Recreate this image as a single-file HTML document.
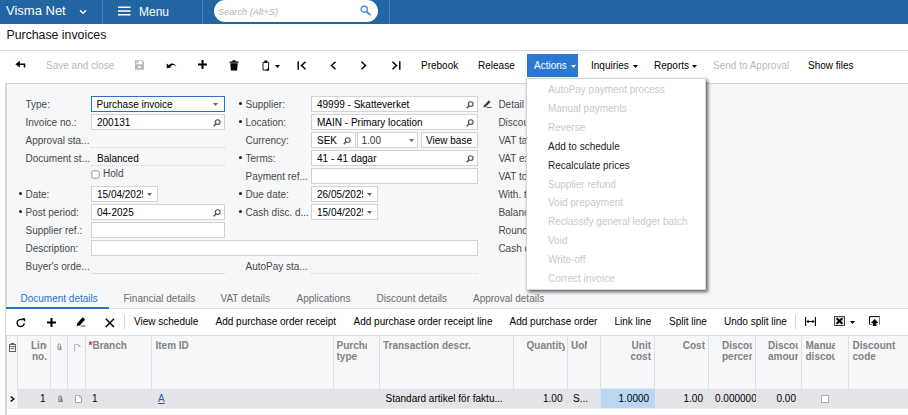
<!DOCTYPE html>
<html><head><meta charset="utf-8"><title>Purchase invoices</title>
<style>
*{box-sizing:border-box;margin:0;padding:0}
html,body{width:908px;height:415px;overflow:hidden;background:#fff;font-family:"Liberation Sans",Arial,sans-serif;font-size:10px;color:#000}
.abs,.t,.lbl,.inp,.mi,.tab,.gt,.gh,.gc{position:absolute;white-space:nowrap}
.t,.lbl,.mi,.tab,.gt,.gc{line-height:12px;font-size:10px}
#top{position:absolute;left:0;top:0;width:908px;height:24px;background:#2265a3;color:#fff}
#top .sep{position:absolute;top:0;width:1px;height:24px;background:#4681b8}
.dis{color:#b9b9b9}
.lbl{color:#484848}
.inp{height:16px;background:#fff;border:1px solid #d3d3d3;line-height:13px;padding-top:1px;padding-left:5px;overflow:hidden;color:#000;font-size:10px}
.dot{position:absolute;border-top:1px dotted #d4d4d4;height:0}
.req{position:absolute;width:3px;height:3px;border-radius:50%;background:#222}
.mi{left:21px;color:#1a1a1a}
.mi.d{color:#c9c9c9}
.tab{top:293px;color:#6b6b6b}
.gt{top:316px;color:#000}
.gh{font-size:10px;font-weight:bold;color:#828282;line-height:10.8px;overflow:hidden;top:341.2px}
.vl{position:absolute;top:335px;width:1px;height:54px;background:#dedfe2}
.gc{top:393px}
.ic{position:absolute;overflow:visible}
</style></head><body>
<div id="top">
<div class="abs" style="left:6px;top:3px;font-size:13px;line-height:16px">Visma Net</div>
<svg class="ic" style="left:79px;top:9px" width="8" height="6" viewBox="0 0 8 6"><path d="M1 1.2 L4 4.2 L7 1.2" stroke="#fff" stroke-width="1.4" fill="none"/></svg>
<div class="sep" style="left:102px"></div>
<svg class="ic" style="left:118px;top:6px" width="13" height="10" viewBox="0 0 13 10"><path d="M0 1.2h12.5M0 5h12.5M0 8.8h12.5" stroke="#fff" stroke-width="1.5"/></svg>
<div class="abs" style="left:139px;top:4px;font-size:12px;line-height:16px">Menu</div>
<div class="sep" style="left:202px"></div>
<div class="abs" style="left:214px;top:0px;width:164px;height:22px;border-radius:11px;background:#fff"></div>
<div class="abs" style="left:218px;top:6.7px;font-size:9.2px;font-style:italic;color:#b3b3b3;line-height:11px">Search (Alt+S)</div>
<svg class="ic" style="left:360px;top:5px" width="12" height="11" viewBox="0 0 12 11"><circle cx="4.2" cy="4.2" r="3.1" stroke="#2a7bd0" stroke-width="1.2" fill="none"/><path d="M6.5 6.5L10.6 10.2" stroke="#2a7bd0" stroke-width="1.5"/></svg>
<div class="sep" style="left:389px"></div>
</div>
<div class="abs" style="left:6.5px;top:28px;font-size:12.3px;line-height:15px;color:#111">Purchase invoices</div>
<div class="abs" style="left:0;top:50px;width:908px;height:1px;background:#dcdcdc"></div>

<div class="abs" style="left:5px;top:83px;width:903px;height:332px;background:#f6f7f9;border-left:2px solid #d6d7da;border-top:1px solid #d0d2d6"></div>
<svg class="ic" style="left:15px;top:60px" width="11" height="8" viewBox="0 0 11 8"><path d="M3 4.2 H9.5 V7.6" stroke="#000" stroke-width="1.5" fill="none"/><path d="M0.4 4.2 L4.8 0.8 V7.6Z" fill="#000"/></svg>
<div class="t dis" style="left:46px;top:60px">Save and close</div>
<svg class="ic" style="left:135px;top:60px" width="9" height="10" viewBox="0 0 9 10"><path d="M0 0.3h7.6l1.4 1.4v8h-9z" fill="#b9b9b9"/><rect x="1.6" y="1" width="5.6" height="3.2" fill="#fff"/><rect x="2.4" y="1" width="1" height="2" fill="#999"/><circle cx="4.5" cy="7" r="1.3" fill="#fff"/></svg>
<svg class="ic" style="left:166px;top:62px" width="11" height="7" viewBox="0 0 11 7"><path d="M2.8 3.4 C4.6 0.6 8.8 0.8 10.2 4.6 C8.6 2.6 6 2.4 4.4 4.6Z" fill="#000"/><path d="M0.6 1.6 L5.4 5.2 L0.8 6.2Z" fill="#000"/></svg>
<svg class="ic" style="left:198px;top:60px" width="9" height="9" viewBox="0 0 9 9"><path d="M4.5 0v9M0 4.5h9" stroke="#000" stroke-width="2"/></svg>
<svg class="ic" style="left:229px;top:60px" width="10" height="11" viewBox="0 0 10 11"><path d="M0.5 1.5h9v1.3h-9z M3.5 0.3h3v1.4h-3z M1.3 3.3h7.4l-0.6 7.2h-6.2z" fill="#000"/></svg>
<svg class="ic" style="left:261.5px;top:60px" width="8" height="11" viewBox="0 0 8 11"><path d="M1 2.4h5.6v7.6h-5.6z" stroke="#000" stroke-width="0.9" fill="none"/><path d="M2.3 0.4h3v2h-3z M7 7V10.4H4Z" fill="#000"/></svg>
<svg class="ic" style="left:275px;top:64.5px" width="5" height="3" viewBox="0 0 5 3"><path d="M0 0h5L2.5 3z" fill="#000"/></svg>
<svg class="ic" style="left:297px;top:61px" width="10" height="9" viewBox="0 0 10 9"><path d="M1.2 0.3v8.4" stroke="#000" stroke-width="1.4"/><path d="M8.5 0.8L4.5 4.5L8.5 8.2" stroke="#000" stroke-width="1.5" fill="none"/></svg>
<svg class="ic" style="left:329px;top:61px" width="8" height="9" viewBox="0 0 8 9"><path d="M6.5 0.8L2.5 4.5L6.5 8.2" stroke="#000" stroke-width="1.5" fill="none"/></svg>
<svg class="ic" style="left:360px;top:61px" width="8" height="9" viewBox="0 0 8 9"><path d="M1.5 0.8L5.5 4.5L1.5 8.2" stroke="#000" stroke-width="1.5" fill="none"/></svg>
<svg class="ic" style="left:391px;top:61px" width="10" height="9" viewBox="0 0 10 9"><path d="M8.8 0.3v8.4" stroke="#000" stroke-width="1.4"/><path d="M1.5 0.8L5.5 4.5L1.5 8.2" stroke="#000" stroke-width="1.5" fill="none"/></svg>
<div class="t" style="left:421px;top:60px">Prebook</div>
<div class="t" style="left:478px;top:60px">Release</div>
<div class="abs" style="left:527px;top:54px;width:51px;height:23px;background:#2a78d2"></div>
<div class="t" style="left:534px;top:60px;color:#fff">Actions</div>
<svg class="ic" style="left:571px;top:64.5px" width="5" height="3" viewBox="0 0 5 3"><path d="M0 0h5L2.5 3z" fill="#fff"/></svg>
<div class="t" style="left:591px;top:60px">Inquiries</div>
<svg class="ic" style="left:633px;top:64.5px" width="5" height="3" viewBox="0 0 5 3"><path d="M0 0h5L2.5 3z" fill="#000"/></svg>
<div class="t" style="left:654px;top:60px">Reports</div>
<svg class="ic" style="left:692px;top:64.5px" width="5" height="3" viewBox="0 0 5 3"><path d="M0 0h5L2.5 3z" fill="#000"/></svg>
<div class="t dis" style="left:713px;top:60px">Send to Approval</div>
<div class="t" style="left:808px;top:60px">Show files</div>

<div class="lbl" style="left:25.5px;top:99px">Type:</div>
<div class="inp" style="left:91px;top:96px;width:134px;height:16px;border:1.5px solid #2a72c8;line-height:13px;padding-left:4.5px">Purchase invoice<svg class="ic" style="right:6px;top:5.7px" width="5" height="3" viewBox="0 0 5 3"><path d="M0 0h5L2.5 3z" fill="#666"/></svg></div>
<div class="lbl" style="left:25.5px;top:117px">Invoice no.:</div>
<div class="inp" style="left:91px;top:114px;width:134px;">200131<svg class="ic" style="right:3px;top:3.5px" width="8" height="8" viewBox="0 0 8 8"><circle cx="4.7" cy="3.1" r="2.4" stroke="#505050" stroke-width="1.15" fill="none"/><path d="M3 4.9L0.7 7.3" stroke="#505050" stroke-width="1.4"/></svg></div>
<div class="lbl" style="left:25.5px;top:135px">Approval sta...</div>
<div class="dot" style="left:91px;top:147px;width:134px"></div>
<div class="lbl" style="left:25.5px;top:153px">Document st...</div>
<div class="t" style="left:97px;top:153px">Balanced</div>
<div class="dot" style="left:91px;top:165px;width:134px"></div>
<svg class="ic" style="left:90px;top:169px" width="11" height="11" viewBox="0 0 11 11"><rect x="1.8" y="1.8" width="7.4" height="7.4" rx="1.6" fill="#fff" stroke="#8c8c8c" stroke-width="0.9"/></svg><div class="lbl" style="left:103px;top:167.5px">Hold</div>
<div class="req" style="left:18.5px;top:192px"></div>
<div class="lbl" style="left:25.5px;top:189px">Date:</div>
<div class="inp" style="left:91px;top:186px;width:67px;"><div style="width:45.7px;overflow:hidden">15/04/2025</div><svg class="ic" style="right:5px;top:5.7px" width="5" height="3" viewBox="0 0 5 3"><path d="M0 0h5L2.5 3z" fill="#666"/></svg></div>
<div class="req" style="left:18.5px;top:210px"></div>
<div class="lbl" style="left:25.5px;top:207px">Post period:</div>
<div class="inp" style="left:91px;top:204px;width:134px;">04-2025<svg class="ic" style="right:3px;top:3.5px" width="8" height="8" viewBox="0 0 8 8"><circle cx="4.7" cy="3.1" r="2.4" stroke="#505050" stroke-width="1.15" fill="none"/><path d="M3 4.9L0.7 7.3" stroke="#505050" stroke-width="1.4"/></svg></div>
<div class="lbl" style="left:25.5px;top:225px">Supplier ref.:</div>
<div class="inp" style="left:91px;top:222px;width:134px;"></div>
<div class="lbl" style="left:25.5px;top:243px">Description:</div>
<div class="inp" style="left:91px;top:240px;width:387px;"></div>
<div class="lbl" style="left:25.5px;top:261px">Buyer's orde...</div>
<div class="abs" style="left:91px;top:273px;width:134px;height:1px;background:#d9d9dc"></div>
<div class="req" style="left:238.5px;top:102px"></div>
<div class="lbl" style="left:245.5px;top:99px">Supplier:</div>
<div class="inp" style="left:311px;top:96px;width:167px;">49999 - Skatteverket<svg class="ic" style="right:3px;top:3.5px" width="8" height="8" viewBox="0 0 8 8"><circle cx="4.7" cy="3.1" r="2.4" stroke="#505050" stroke-width="1.15" fill="none"/><path d="M3 4.9L0.7 7.3" stroke="#505050" stroke-width="1.4"/></svg></div>
<div class="req" style="left:238.5px;top:120px"></div>
<div class="lbl" style="left:245.5px;top:117px">Location:</div>
<div class="inp" style="left:311px;top:114px;width:167px;">MAIN - Primary location<svg class="ic" style="right:3px;top:3.5px" width="8" height="8" viewBox="0 0 8 8"><circle cx="4.7" cy="3.1" r="2.4" stroke="#505050" stroke-width="1.15" fill="none"/><path d="M3 4.9L0.7 7.3" stroke="#505050" stroke-width="1.4"/></svg></div>
<div class="lbl" style="left:245.5px;top:135px">Currency:</div>
<div class="inp" style="left:311px;top:132px;width:44.5px;">SEK<svg class="ic" style="right:4px;top:3.5px" width="8" height="8" viewBox="0 0 8 8"><circle cx="4.7" cy="3.1" r="2.4" stroke="#505050" stroke-width="1.15" fill="none"/><path d="M3 4.9L0.7 7.3" stroke="#505050" stroke-width="1.4"/></svg></div>
<div class="inp" style="left:357px;top:132px;width:61px;color:#333;padding-left:3.5px">1.00<svg class="ic" style="right:3.5px;top:5.7px" width="5" height="3" viewBox="0 0 5 3"><path d="M0 0h5L2.5 3z" fill="#666"/></svg></div>
<div class="inp" style="left:420.5px;top:132px;width:57px;text-align:center;padding-left:0;background:#fbfbfb">View base</div>
<div class="req" style="left:238.5px;top:156px"></div>
<div class="lbl" style="left:245.5px;top:153px">Terms:</div>
<div class="inp" style="left:311px;top:150px;width:167px;">41 - 41 dagar<svg class="ic" style="right:3px;top:3.5px" width="8" height="8" viewBox="0 0 8 8"><circle cx="4.7" cy="3.1" r="2.4" stroke="#505050" stroke-width="1.15" fill="none"/><path d="M3 4.9L0.7 7.3" stroke="#505050" stroke-width="1.4"/></svg></div>
<div class="lbl" style="left:245.5px;top:171px">Payment ref...</div>
<div class="inp" style="left:311px;top:168px;width:167px;"></div>
<div class="req" style="left:238.5px;top:192px"></div>
<div class="lbl" style="left:245.5px;top:189px">Due date:</div>
<div class="inp" style="left:311px;top:186px;width:67px;"><div style="width:45.7px;overflow:hidden">26/05/2025</div><svg class="ic" style="right:5px;top:5.7px" width="5" height="3" viewBox="0 0 5 3"><path d="M0 0h5L2.5 3z" fill="#666"/></svg></div>
<div class="req" style="left:238.5px;top:210px"></div>
<div class="lbl" style="left:245.5px;top:207px">Cash disc. d...</div>
<div class="inp" style="left:311px;top:204px;width:67px;"><div style="width:45.7px;overflow:hidden">15/04/2025</div><svg class="ic" style="right:5px;top:5.7px" width="5" height="3" viewBox="0 0 5 3"><path d="M0 0h5L2.5 3z" fill="#666"/></svg></div>
<div class="lbl" style="left:245.5px;top:261px">AutoPay sta...</div>
<div class="dot" style="left:311px;top:273px;width:167px"></div>
<svg class="ic" style="left:483px;top:99px" width="9" height="9" viewBox="0 0 9 9"><path d="M1 6.2L5.8 1.2L7.6 3L2.8 8L0.6 8.4Z" fill="#484848"/><path d="M3.5 8.5h5" stroke="#484848" stroke-width="0.9"/></svg>
<div class="lbl" style="left:498.4px;top:99px;width:28px;overflow:hidden">Detail total:</div>
<div class="lbl" style="left:498.4px;top:117px;width:28px;overflow:hidden">Discount total:</div>
<div class="lbl" style="left:498.4px;top:135px;width:28px;overflow:hidden">VAT taxable:</div>
<div class="lbl" style="left:498.4px;top:153px;width:28px;overflow:hidden">VAT exempt:</div>
<div class="lbl" style="left:498.4px;top:171px;width:28px;overflow:hidden">VAT total:</div>
<div class="lbl" style="left:498.4px;top:189px;width:28px;overflow:hidden">With. tax:</div>
<div class="lbl" style="left:498.4px;top:207px;width:28px;overflow:hidden">Balance:</div>
<div class="lbl" style="left:498.4px;top:225px;width:28px;overflow:hidden">Rounding diff.:</div>
<div class="lbl" style="left:498.4px;top:243px;width:28px;overflow:hidden">Cash discount:</div>
<div class="abs" style="left:6px;top:308px;width:902px;height:1px;background:#dfe0e3"></div>
<div class="abs" style="left:6px;top:307px;width:103px;height:2px;background:#2a72c8"></div>
<div class="tab" style="left:20.5px;color:#2a72c8">Document details</div>
<div class="tab" style="left:123.5px;">Financial details</div>
<div class="tab" style="left:220.5px;">VAT details</div>
<div class="tab" style="left:296.5px;">Applications</div>
<div class="tab" style="left:376.5px;">Discount details</div>
<div class="tab" style="left:473px;">Approval details</div>
<div class="abs" style="left:6px;top:309px;width:902px;height:26px;background:#fff"></div>
<svg class="ic" style="left:16px;top:317.5px" width="10" height="10" viewBox="0 0 10 10"><path d="M8.3 5.3A3.6 3.6 0 1 1 6.6 1.9" stroke="#000" stroke-width="1.35" fill="none"/><path d="M5.6 0.2L9.2 0.2L9.2 3.9Z" fill="#000"/></svg>
<svg class="ic" style="left:47px;top:317.5px" width="9" height="9" viewBox="0 0 9 9"><path d="M4.5 0v9M0 4.5h9" stroke="#000" stroke-width="2"/></svg>
<svg class="ic" style="left:75.5px;top:317px" width="10" height="10" viewBox="0 0 10 10"><path d="M1.2 6.2L6.2 0.8Q6.8 0.2 7.5 0.8L8.6 1.9Q9.2 2.6 8.6 3.2L3.6 8.4L0.6 9Z" fill="#000"/><path d="M4.6 9h4.8" stroke="#000" stroke-width="0.7"/></svg>
<svg class="ic" style="left:105px;top:317.5px" width="10" height="10" viewBox="0 0 10 10"><path d="M0.8 0.8L9 9M9 0.8L0.8 9" stroke="#000" stroke-width="1.5"/></svg>
<div class="abs" style="left:124px;top:315px;width:1px;height:14px;background:#d4d4d4"></div>
<div class="gt" style="left:134px">View schedule</div>
<div class="gt" style="left:215.5px">Add purchase order receipt</div>
<div class="gt" style="left:353.5px">Add purchase order receipt line</div>
<div class="gt" style="left:509.5px">Add purchase order</div>
<div class="gt" style="left:614.5px">Link line</div>
<div class="gt" style="left:669px">Split line</div>
<div class="gt" style="left:724px">Undo split line</div>
<div class="abs" style="left:795px;top:315px;width:1px;height:14px;background:#d4d4d4"></div>
<svg class="ic" style="left:805px;top:317px" width="11" height="9" viewBox="0 0 11 9"><path d="M0.6 0v9M10.4 0v9" stroke="#000" stroke-width="1.1" fill="none"/><path d="M2 4.5h7" stroke="#000" stroke-width="1"/><path d="M1.2 4.5l2.4-1.8v3.6zM9.8 4.5l-2.4-1.8v3.6z" fill="#000"/></svg>
<svg class="ic" style="left:834px;top:316px" width="11" height="10" viewBox="0 0 11 10"><rect x="0.5" y="0.5" width="10" height="9" fill="#e4e4e4" stroke="#333" stroke-width="0.9"/><path d="M2.6 2.2L8.4 7.8M8.4 2.2L2.6 7.8" stroke="#000" stroke-width="1.9"/></svg>
<svg class="ic" style="left:850px;top:321px" width="5" height="3" viewBox="0 0 5 3"><path d="M0 0h5L2.5 3z" fill="#000"/></svg>
<svg class="ic" style="left:869px;top:316px" width="11" height="10" viewBox="0 0 11 10"><path d="M0.5 8.6V0.6H10.5" stroke="#000" stroke-width="1" fill="none"/><path d="M10.5 0.6V8.6M0.5 8.6H3" stroke="#555" stroke-width="0.8" fill="none"/><path d="M5.6 3L9.4 7H7.4V10H3.8V7H1.8Z" fill="#000"/></svg>
<div class="abs" style="left:7px;top:335px;width:901px;height:54px;background:#f6f7f9;border-top:1px solid #dcdde0"></div>
<svg class="ic" style="left:0;top:380px" width="908" height="35" viewBox="0 0 908 35"><rect x="7" y="8.7" width="901" height="26.3" fill="#fff"/><rect x="7" y="8.7" width="901" height="19.6" fill="#e2e4e8"/><rect x="7" y="8.7" width="10.3" height="19.6" fill="#f6f7f9"/><rect x="600.8" y="8.7" width="54.2" height="19.6" fill="#b9d7f3"/><rect x="7" y="28.3" width="901" height="0.8" fill="#e6e7ea"/></svg>
<div class="vl" style="left:17px"></div>
<div class="vl" style="left:50px"></div>
<div class="vl" style="left:67px"></div>
<div class="vl" style="left:85px"></div>
<div class="vl" style="left:151px"></div>
<div class="vl" style="left:333px"></div>
<div class="vl" style="left:379px"></div>
<div class="vl" style="left:513px"></div>
<div class="vl" style="left:567px"></div>
<div class="vl" style="left:600px"></div>
<div class="vl" style="left:654px"></div>
<div class="vl" style="left:708px"></div>
<div class="vl" style="left:755px"></div>
<div class="vl" style="left:801px"></div>
<div class="vl" style="left:848px"></div>
<div class="gh" style="left:20px;width:27px;"><div style="margin-left:11px">Line</div><div style="text-align:right">no.</div></div>
<div class="gh" style="left:88.5px;width:60px;text-align:left;"><span style="color:#e02020">*</span>Branch</div>
<div class="gh" style="left:155.5px;width:100px;text-align:left;">Item ID</div>
<div class="gh" style="left:336.5px;width:30.3px;text-align:left;">Purchase<br>type</div>
<div class="gh" style="left:383px;width:120px;text-align:left;">Transaction descr.</div>
<div class="gh" style="left:526.5px;width:38px;text-align:left;">Quantity</div>
<div class="gh" style="left:571px;width:16.3px;text-align:left;">UoM</div>
<div class="gh" style="left:610px;width:41px;text-align:right;">Unit<br>cost</div>
<div class="gh" style="left:660px;width:45px;text-align:right;">Cost</div>
<div class="gh" style="left:722px;width:30px;text-align:left;">Discount<br>percent</div>
<div class="gh" style="left:768px;width:30px"><div>Discount</div><div>amount</div></div>
<div class="gh" style="left:805.5px;width:29px;text-align:left;">Manual<br>discount</div>
<div class="gh" style="left:852.5px;width:50px;text-align:left;">Discount<br>code</div>
<svg class="ic" style="left:9px;top:342.5px" width="7" height="9" viewBox="0 0 7 9"><rect x="0.5" y="1.5" width="6" height="7" fill="#fff" stroke="#666" stroke-width="1"/><path d="M0.5 3.6h6M1.5 5.6h4M1.8 0.5h3.4" stroke="#666" stroke-width="1"/></svg>
<svg class="ic" style="left:56.5px;top:343px" width="6" height="8" viewBox="0 0 6 8"><path d="M0.9 6.6V2.2a1.3 1.3 0 0 1 2.6 0V6.6Z" stroke="#8a8a8a" stroke-width="0.9" fill="none"/><path d="M2.2 3v3.2M4.4 4.2V7" stroke="#aaa" stroke-width="0.8" fill="none"/></svg>
<svg class="ic" style="left:73.5px;top:343.5px" width="7" height="8" viewBox="0 0 7 8"><path d="M0.5 7.5V0.5H4.5L6.5 2.5" stroke="#b0b0b0" stroke-width="0.9" fill="none"/><path d="M4.5 0.5V2.5H6.5" stroke="#b0b0b0" stroke-width="0.7" fill="none"/></svg>
<svg class="ic" style="left:10px;top:395.5px" width="5" height="6" viewBox="0 0 5 6"><path d="M0.7 0.5L3.8 3L0.7 5.5" stroke="#000" stroke-width="1.4" fill="none"/></svg>
<div class="gc" style="left:40px">1</div>
<svg class="ic" style="left:57.5px;top:395px" width="6" height="8" viewBox="0 0 6 8"><path d="M0.9 6.6V2.2a1.3 1.3 0 0 1 2.6 0V6.6Z" stroke="#666" stroke-width="0.9" fill="none"/><path d="M2.2 3v3.2M4.4 4.2V7" stroke="#888" stroke-width="0.8" fill="none"/></svg>
<svg class="ic" style="left:74.5px;top:395px" width="7" height="8" viewBox="0 0 7 8"><path d="M0.5 7.5V0.5H4.5L6.5 2.5V7.5Z" stroke="#a0a0a0" stroke-width="0.9" fill="#fff"/><path d="M4.5 0.5V2.5H6.5" stroke="#a0a0a0" stroke-width="0.7" fill="none"/></svg>
<div class="gc" style="left:92px">1</div>
<div class="gc" style="left:158px;color:#2a5fb4;text-decoration:underline">A</div>
<div class="gc" style="left:385.5px">Standard artikel för faktu...</div>
<div class="gc" style="left:543px">1.00</div>
<div class="gc" style="left:573px">S...</div>
<div class="gc" style="left:618.5px">1.0000</div>
<div class="gc" style="left:683.5px">1.00</div>
<div class="gc" style="left:715px;width:40.5px;overflow:hidden">0.000000</div>
<div class="gc" style="left:776.5px">0.00</div>
<div class="abs" style="left:821px;top:395px;width:8px;height:8px;border:1px solid #adadad;background:#fff"></div>
<div class="abs" style="left:526px;top:78px;width:180px;height:212px;background:#fff;border:1px solid #d2d2d2;box-shadow:2px 2px 3.5px rgba(0,0,0,.62)">
<div class="mi d" style="top:5.0px">AutoPay payment process</div>
<div class="mi d" style="top:23.91px">Manual payments</div>
<div class="mi d" style="top:42.82px">Reverse</div>
<div class="mi" style="top:61.73px">Add to schedule</div>
<div class="mi" style="top:80.64px">Recalculate prices</div>
<div class="mi d" style="top:99.55px">Supplier refund</div>
<div class="mi d" style="top:118.46px">Void prepayment</div>
<div class="mi d" style="top:137.37px">Reclassify general ledger batch</div>
<div class="mi d" style="top:156.28px">Void</div>
<div class="mi d" style="top:175.19px">Write-off</div>
<div class="mi d" style="top:194.1px">Correct invoice</div>
</div>
</body></html>
